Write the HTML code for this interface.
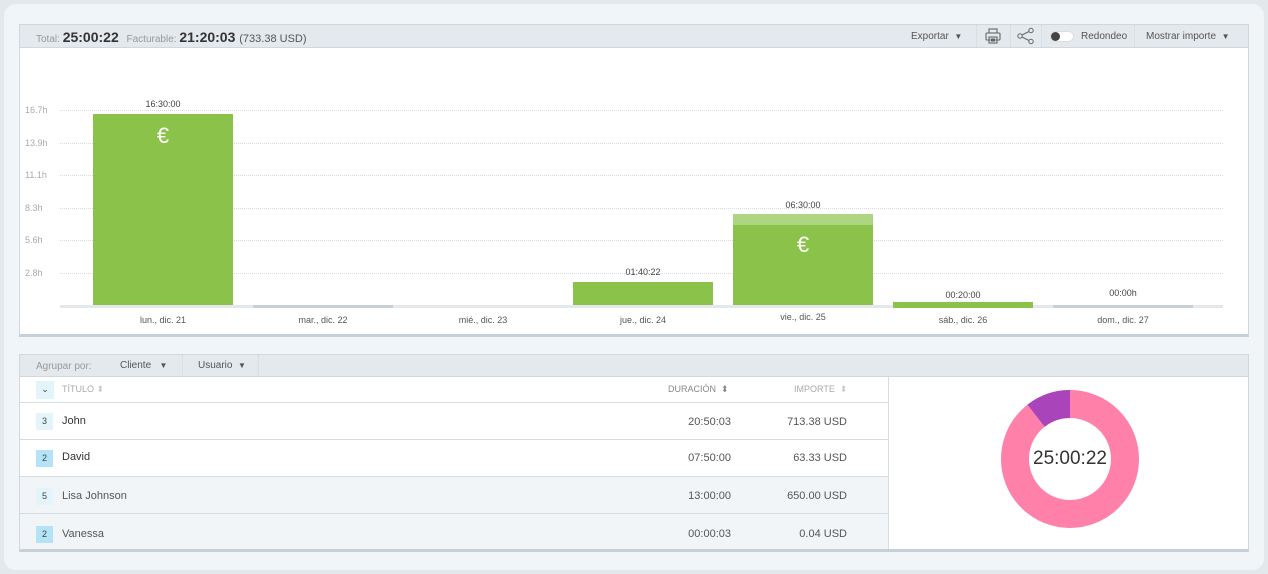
<!DOCTYPE html>
<html><head><meta charset="utf-8"><style>
*{box-sizing:border-box;margin:0;padding:0}
body{width:1268px;height:574px;background:#e3e8ec;font-family:"Liberation Sans",sans-serif;position:relative;overflow:hidden;color:#333}
.a{position:absolute}
.outer{left:4px;top:4px;width:1260px;height:566px;background:#f2f5f8;border-radius:12px}
.panel{background:#fff;border:1px solid #cfd8df}
.hdr{background:#e4e9ed;border-bottom:1px solid #cfd8df}
.g{color:#999;font-size:10px}
.grid{left:60px;width:1163px;border-top:1px dotted #d6dbe0;height:0}
.yl{left:25px;font-size:9px;color:#aaa}
.bar{background:#8bc34a}
.vl{font-size:9px;color:#444;width:140px;text-align:center}
.xl{font-size:9px;color:#555;width:160px;text-align:center;top:315px}
.eur{color:#fff;font-size:22px;width:140px;text-align:center}
.row{left:20px;width:868px;border-bottom:1px solid #d5dde3;font-size:11px}
.badge{position:absolute;left:16px;width:17px;height:17px;background:#e4f4fb;font-size:9px;text-align:center;line-height:17px;color:#444}
.nm{position:absolute;left:42px;font-size:11px}
.d{position:absolute;right:157px;font-size:11px;color:#555}
.u{position:absolute;right:41px;font-size:11px;color:#555}
.sep{border-left:1px dotted #cdd4da;height:22px;top:25px}
</style></head><body>
<div class="a outer"></div>
<div class="a panel" style="left:19px;top:24px;width:1230px;height:313px;border-bottom:3px solid #c5d0d8"></div>
<div class="a hdr" style="left:20px;top:25px;width:1228px;height:23px"></div>
<div class="a" style="left:36px;top:29px;font-size:14px;white-space:nowrap"><span class="g">Total: </span><b style="color:#333">25:00:22</b> &nbsp;<span class="g">Facturable: </span><b>21:20:03</b> <span style="font-size:11px;color:#555">(733.38 USD)</span></div>
<div class="a" style="left:911px;top:31px;font-size:10px;color:#555">Exportar &nbsp;<span style="font-size:8px">▼</span></div>
<div class="a sep" style="left:976px"></div>
<svg class="a" style="left:984px;top:27px" width="18" height="18" viewBox="0 0 18 18" fill="none" stroke="#666" stroke-width="1.1"><rect x="5" y="2" width="8" height="4"/><rect x="2" y="6" width="14" height="7" rx="1"/><rect x="5" y="10" width="8" height="6"/><line x1="7" y1="12" x2="11" y2="12"/><line x1="7" y1="14" x2="11" y2="14"/></svg>
<div class="a sep" style="left:1010px"></div>
<svg class="a" style="left:1016px;top:27px" width="20" height="18" viewBox="0 0 20 18" fill="none" stroke="#666" stroke-width="1"><circle cx="4" cy="9" r="2.2"/><circle cx="15" cy="3.5" r="2.2"/><circle cx="15" cy="14.5" r="2.2"/><line x1="6" y1="8" x2="13" y2="4.5"/><line x1="6" y1="10" x2="13" y2="13.5"/></svg>
<div class="a sep" style="left:1041px"></div>
<div class="a" style="left:1050px;top:31px;width:24px;height:11px;border-radius:6px;background:#fff;border:1px solid #ddd"></div>
<div class="a" style="left:1051px;top:32px;width:9px;height:9px;border-radius:50%;background:#444"></div>
<div class="a" style="left:1081px;top:31px;font-size:10px;color:#555">Redondeo</div>
<div class="a sep" style="left:1134px"></div>
<div class="a" style="left:1146px;top:31px;font-size:10px;color:#555">Mostrar importe &nbsp;<span style="font-size:8px">▼</span></div>

<div class="a grid" style="top:110px"></div><div class="a yl" style="top:105px">16.7h</div>
<div class="a grid" style="top:143px"></div><div class="a yl" style="top:138px">13.9h</div>
<div class="a grid" style="top:175px"></div><div class="a yl" style="top:170px">11.1h</div>
<div class="a grid" style="top:208px"></div><div class="a yl" style="top:203px">8.3h</div>
<div class="a grid" style="top:240px"></div><div class="a yl" style="top:235px">5.6h</div>
<div class="a grid" style="top:273px"></div><div class="a yl" style="top:268px">2.8h</div>
<div class="a" style="left:60px;top:305px;width:1163px;height:3px;background:#e4e8eb"></div>

<div class="a bar" style="left:93px;top:114px;width:140px;height:191px"></div>
<div class="a vl" style="left:93px;top:99px">16:30:00</div>
<div class="a eur" style="left:93px;top:123px">€</div>
<div class="a" style="left:253px;top:305px;width:140px;height:3px;background:#c5d0d8"></div>
<div class="a bar" style="left:573px;top:282px;width:140px;height:23px"></div>
<div class="a vl" style="left:573px;top:267px">01:40:22</div>
<div class="a" style="left:733px;top:214px;width:140px;height:11px;background:#aed581"></div>
<div class="a bar" style="left:733px;top:225px;width:140px;height:80px"></div>
<div class="a vl" style="left:733px;top:200px">06:30:00</div>
<div class="a eur" style="left:733px;top:232px">€</div>
<div class="a bar" style="left:893px;top:302px;width:140px;height:6px"></div>
<div class="a vl" style="left:893px;top:290px">00:20:00</div>
<div class="a" style="left:1053px;top:305px;width:140px;height:3px;background:#c5d0d8"></div>
<div class="a vl" style="left:1053px;top:288px">00:00h</div>

<div class="a xl" style="left:83px">lun., dic. 21</div>
<div class="a xl" style="left:243px">mar., dic. 22</div>
<div class="a xl" style="left:403px">mié., dic. 23</div>
<div class="a xl" style="left:563px">jue., dic. 24</div>
<div class="a xl" style="left:723px;top:312px">vie., dic. 25</div>
<div class="a xl" style="left:883px">sáb., dic. 26</div>
<div class="a xl" style="left:1043px">dom., dic. 27</div>

<div class="a panel" style="left:19px;top:354px;width:1230px;height:198px;border-bottom:3px solid #c5d0d8"></div>
<div class="a hdr" style="left:20px;top:355px;width:1228px;height:22px"></div>
<div class="a g" style="left:36px;top:361px">Agrupar por:</div>
<div class="a" style="left:120px;top:360px;font-size:10px;color:#555">Cliente &nbsp;&nbsp;<span style="font-size:8px">▼</span></div>
<div class="a" style="left:182px;top:355px;height:22px;border-left:1px dotted #cdd4da"></div>
<div class="a" style="left:198px;top:360px;font-size:10px;color:#555">Usuario &nbsp;<span style="font-size:8px">▼</span></div>
<div class="a" style="left:258px;top:355px;height:22px;border-left:1px dotted #cdd4da"></div>

<div class="a row" style="top:377px;height:26px;background:#fff">
<div class="badge" style="top:4px;left:16px;width:18px;height:18px;line-height:16px">⌄</div>
<div class="a" style="left:42px;top:7px;font-size:9px;color:#aaa">TÍTULO <span style="color:#ccc">⬍</span></div>
<div class="a" style="left:648px;top:7px;font-size:9px;color:#888">DURACIÓN &nbsp;<span>⬍</span></div>
<div class="a" style="left:774px;top:7px;font-size:9px;color:#aaa">IMPORTE &nbsp;<span style="color:#ccc">⬍</span></div>
</div>
<div class="a row" style="top:403px;height:37px;background:#fff"><div class="badge" style="top:10px">3</div><div class="nm" style="top:12px">John</div><div class="d" style="top:13px">20:50:03</div><div class="u" style="top:13px">713.38 USD</div></div>
<div class="a row" style="top:440px;height:37px;background:#fff"><div class="badge" style="top:10px;background:#b3e3f7">2</div><div class="nm" style="top:11px">David</div><div class="d" style="top:12px">07:50:00</div><div class="u" style="top:12px">63.33 USD</div></div>
<div class="a row" style="top:477px;height:37px;background:#f2f5f8"><div class="badge" style="top:11px">5</div><div class="nm" style="top:13px;color:#555">Lisa Johnson</div><div class="d" style="top:13px">13:00:00</div><div class="u" style="top:13px">650.00 USD</div></div>
<div class="a row" style="top:514px;height:35px;background:#f2f5f8;border-bottom:none"><div class="badge" style="top:12px;background:#b3e3f7">2</div><div class="nm" style="top:14px;color:#555">Vanessa</div><div class="d" style="top:14px">00:00:03</div><div class="u" style="top:14px">0.04 USD</div></div>
<div class="a" style="left:888px;top:377px;width:1px;height:172px;background:#d5dde3"></div>

<svg class="a" style="left:1000px;top:389px" width="140" height="140" viewBox="-70 -70 140 140">
<circle r="55" fill="none" stroke="#ff80a9" stroke-width="28"/>
<path d="M0 -69 A69 69 0 0 0 -42.5 -54.4 L-25.3 -32.3 A41 41 0 0 1 0 -41 Z" fill="#a944bb"/>
</svg>
<div class="a" style="left:1020px;top:448px;width:100px;text-align:center;font-size:19px;color:#333">25:00:22</div>
</body></html>
